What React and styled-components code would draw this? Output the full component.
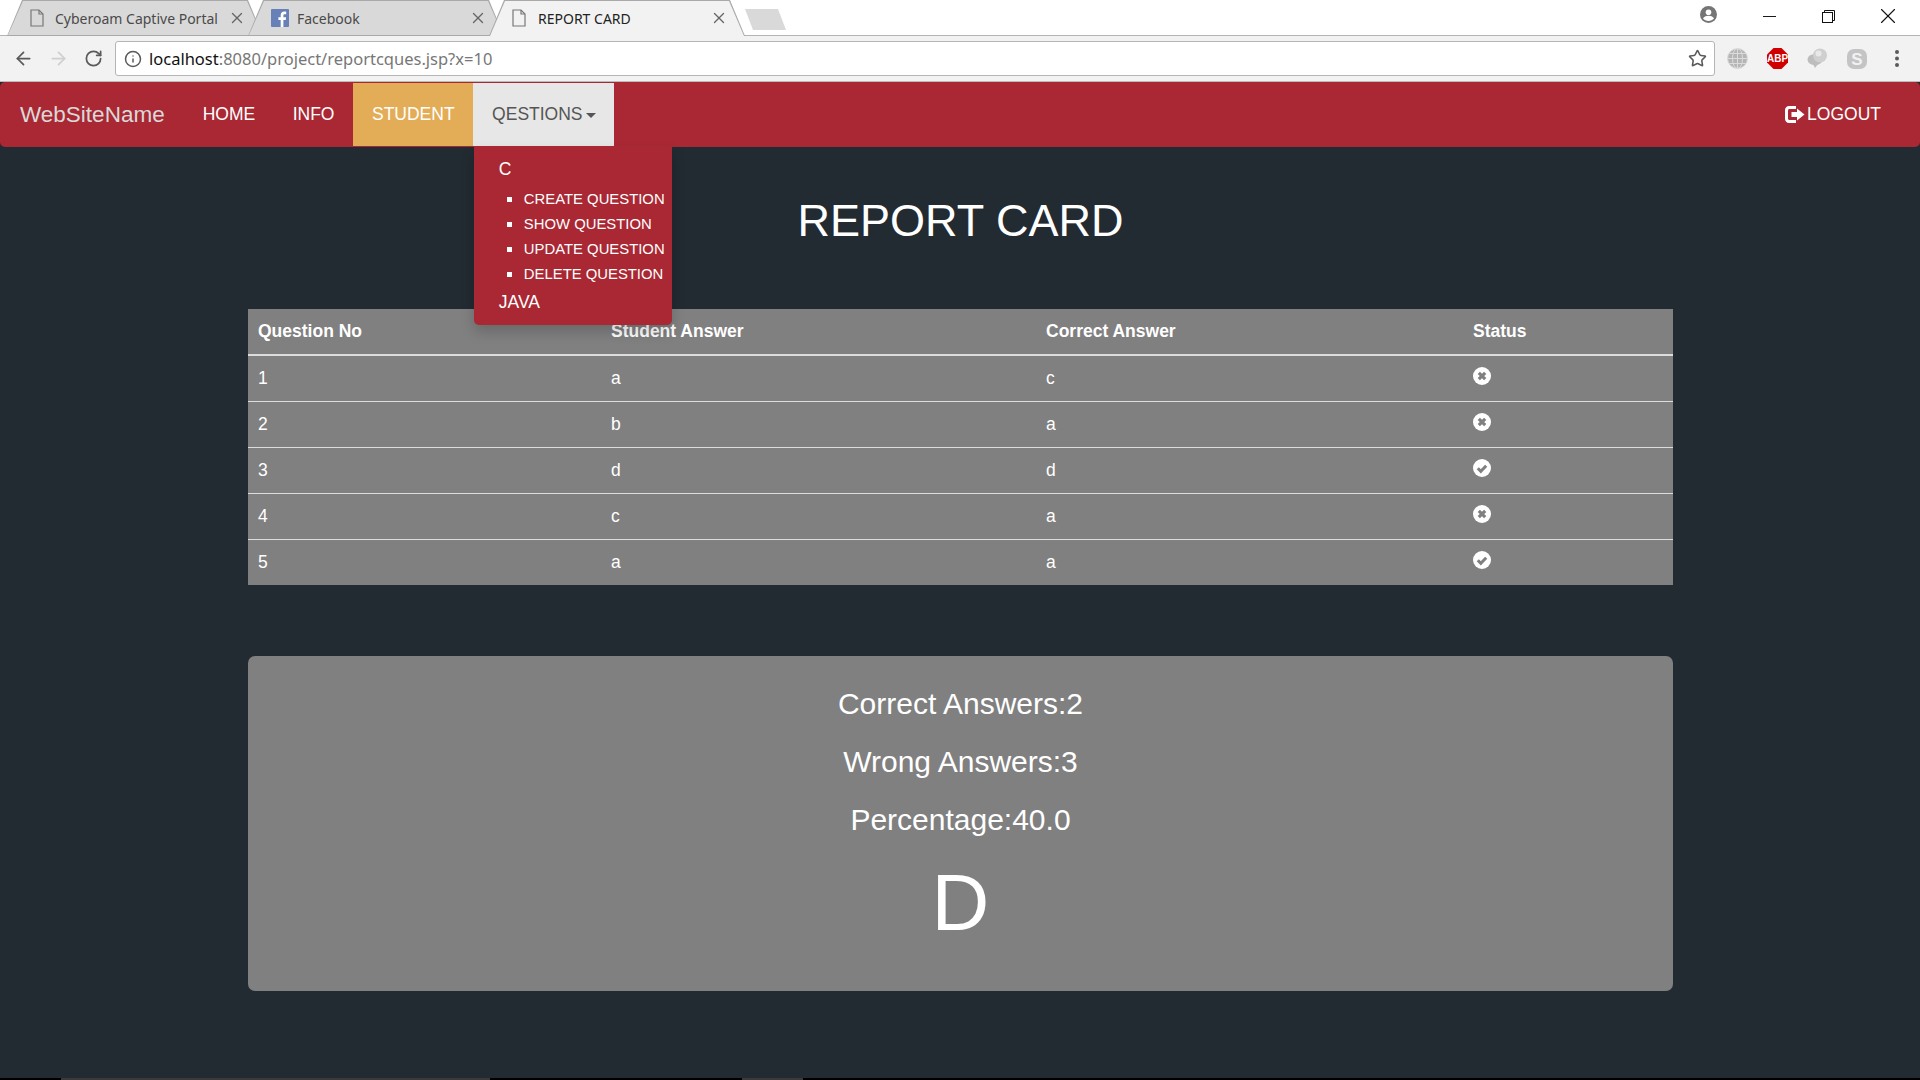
import React from "react";
import styled, { createGlobalStyle } from "styled-components";
import { ArrowLeft, ArrowRight, RotateCw, Info, Star, X, Minus } from "lucide-react";

const GlobalStyle = createGlobalStyle`
    html, body {
        margin: 0;
        padding: 0;
        background: #222a32;
        overflow: hidden;
    }
    * {
        box-sizing: border-box;
    }
`;

const Page = styled.div`
    display: flex;
    flex-direction: column;
    height: 1080px;
    font-family: "Liberation Sans", Arial, sans-serif;
    font-size: 17.5px;
    color: #fff;
`;

/* browser chrome */
const TitleBar = styled.div`
    align-items: flex-start;
    background: #fff;
    display: flex;
    height: 36px;
    padding-left: 7px;
    border-bottom: 1px solid #b4b4b4;
`;
const Tab = styled.div`
    align-items: center;
    display: flex;
    flex: none;
    height: 36px;
    margin-right: -15px;
    padding: 0 17px 0 23px;
    position: relative;
    width: 256px;
    z-index: ${(p) => (p.$active ? 2 : 1)};
    font-family: "Noto Sans", sans-serif;
    font-size: 14px;
    color: ${(p) => (p.$active ? "#222" : "#4a4a4a")};
    &::before,
    &::after {
        content: "";
        position: absolute;
        z-index: -1;
    }
    &::before {
        inset: 0;
        background: #a9a9a9;
        clip-path: polygon(15px 0, 241px 0, 256px 36px, 0 36px);
    }
    &::after {
        inset: 1px 1px ${(p) => (p.$active ? "0" : "1px")} 1px;
        background: ${(p) => (p.$active ? "#f2f2f2" : "#d9d9d9")};
        clip-path: polygon(15px 0, 239px 0, 254px 100%, 0 100%);
    }
`;
const TabLabel = styled.span`
    flex: 1;
    margin-left: ${(p) => p.$gap || "11px"};
    white-space: nowrap;
`;
const TabClose = styled(X)`
    color: #666;
    flex: none;
`;
const NewTab = styled.div`
    background: #d9d9d9;
    clip-path: polygon(0 0, 33px 0, 41px 21px, 8px 21px);
    flex: none;
    height: 21px;
    margin: 9px 0 0 15px;
    position: relative;
    width: 41px;
`;
const WindowControls = styled.div`
    align-items: center;
    display: flex;
    height: 32px;
    margin-left: auto;
    padding-right: 3px;
    color: #111;
`;
const Profile = styled.svg`
    margin-right: 23px;
    margin-top: -3px;
`;
const WindowButton = styled.div`
    align-items: center;
    display: flex;
    justify-content: center;
    width: 59px;
`;
const ToolBar = styled.div`
    align-items: center;
    background: #f2f2f2;
    border-bottom: 1px solid #bcbcbc;
    display: flex;
    height: 46px;
    padding-left: 13px;
`;
const NavIcon = styled.div`
    align-items: center;
    color: ${(p) => (p.$off ? "#cfcfcf" : "#5a5a5a")};
    display: flex;
    flex: none;
    justify-content: center;
    margin-right: 14px;
    width: 21px;
`;
const AddressBox = styled.div`
    align-items: center;
    background: #fff;
    border: 1px solid #b5b5b5;
    border-radius: 3px;
    color: #5a5a5a;
    display: flex;
    flex: none;
    height: 35px;
    margin-left: -3px;
    padding: 0 7px 0 8px;
    width: 1600px;
`;
const Url = styled.div`
    flex: 1;
    margin-left: 7px;
    font-family: "Noto Sans", sans-serif;
    font-size: 16.5px;
    color: #777;
    white-space: nowrap;
    b {
        color: #111;
        font-weight: 400;
    }
`;
const Extensions = styled.div`
    align-items: center;
    display: flex;
    padding-left: 2px;
`;
const ExtensionSlot = styled.div`
    align-items: center;
    display: flex;
    flex: none;
    justify-content: center;
    width: 40px;
`;

/* navbar */
const Navbar = styled.nav`
    align-items: stretch;
    background: #a92833;
    border-radius: 5px;
    display: flex;
    height: 65px;
    padding: 1px 39px 1px 0;
`;
const Brand = styled.a`
    align-items: center;
    color: #d9d9d9;
    display: flex;
    font-size: 22.5px;
    padding: 0 19.25px 0 20px;
`;
const NavItem = styled.a`
    align-items: center;
    background: ${(p) => p.$bg || "transparent"};
    color: ${(p) => p.$color || "#fff"};
    display: flex;
    padding: 0 18.75px;
    white-space: nowrap;
`;
const Caret = styled.span`
    border-left: 5px solid transparent;
    border-right: 5px solid transparent;
    border-top: 5px solid #555;
    margin-left: 3px;
    margin-top: 2px;
`;
const NavRight = styled.div`
    align-items: center;
    display: flex;
    gap: 2px;
    margin-left: auto;
`;
const MenuAnchor = styled.div`
    display: flex;
    position: relative;
`;
const Dropdown = styled.div`
    background: #a92833;
    border-radius: 0 0 5px 5px;
    box-shadow: 0 7px 14px rgba(0, 0, 0, 0.18);
    height: 179px;
    left: 0.5px;
    padding: 11px 0 0 25px;
    position: absolute;
    top: 63px;
    width: 198px;
    z-index: 5;
`;
const GroupName = styled.div`
    line-height: 25px;
`;
const SubList = styled.ul`
    font-size: 14.85px;
    line-height: 25px;
    list-style: none;
    margin: 5px 0 3px;
    padding-left: 25px;
    white-space: nowrap;
`;
const SubItem = styled.li`
    position: relative;
    &::before {
        background: #fff;
        content: "";
        height: 5px;
        left: -17px;
        position: absolute;
        top: 10px;
        width: 5px;
    }
`;

/* page body */
const Main = styled.main`
    display: flex;
    flex: 1;
    flex-direction: column;
    padding: 49px 247px 0 248px;
`;
const Title = styled.h1`
    font-size: 45px;
    font-weight: 400;
    line-height: 50px;
    margin: 0 0 63px;
    text-align: center;
`;
const Table = styled.table`
    background: #808080;
    border-collapse: collapse;
    table-layout: fixed;
    width: 100%;
`;
const HeadCell = styled.th`
    border-bottom: 2px solid #ddd;
    font-weight: 700;
    height: 46px;
    padding: 0 10px;
    text-align: left;
    width: ${(p) => p.$width};
`;
const Row = styled.tr`
    height: 46px;
    & + & td {
        border-top: 1px solid #ddd;
    }
`;
const Cell = styled.td`
    padding: 0 10px;
`;
const StatusIcon = styled.svg`
    display: block;
    margin-top: -5px;
`;
const Summary = styled.section`
    align-items: center;
    background: #808080;
    border-radius: 7px;
    display: flex;
    flex-direction: column;
    height: 335px;
    margin-top: 71px;
    padding-top: 31px;
`;
const Stat = styled.h3`
    font-size: 30px;
    font-weight: 400;
    line-height: 33px;
    margin: 0 0 25px;
`;
const Grade = styled.h1`
    font-size: 80px;
    font-weight: 400;
    line-height: 88px;
    margin: -2px 0 0;
`;

const Strip = styled.div`
    background: #000;
    display: flex;
    flex: none;
    height: 2px;
`;
const StripPart = styled.div`
    background: #3a3a3a;
    margin-left: ${(p) => p.$left}px;
    width: ${(p) => p.$width}px;
`;

const PageIcon = () => (
    <svg width="14" height="18" viewBox="0 0 14 18" fill="none" stroke="#777" strokeWidth="1.2">
        <path d="M1 1h8l4 4v12H1z" />
        <path d="M9 1v4h4" />
    </svg>
);

const FacebookIcon = () => (
    <svg width="18" height="18" viewBox="0 0 18 18">
        <rect width="18" height="18" rx="1" fill="#6781b8" />
        <path d="M12.4 18v-7h2.3l.4-2.8h-2.7V6.5c0-.8.3-1.3 1.4-1.3h1.4V2.7c-.3 0-1.1-.1-2-.1-2.1 0-3.5 1.3-3.5 3.6v2H7.4V11h2.3v7z" fill="#fff" />
    </svg>
);

const ProfileIcon = () => (
    <Profile width="17" height="17" viewBox="0 0 17 17">
        <circle cx="8.5" cy="8.5" r="8.5" fill="#757575" />
        <circle cx="8.5" cy="6.3" r="2.8" fill="#fff" />
        <path d="M3 12.5c1-2 3.5-2.7 5.5-2.7s4.5.7 5.5 2.7c-1.3 1.6-3.3 2.5-5.5 2.5S4.3 14.1 3 12.5z" fill="#fff" />
    </Profile>
);

const RestoreIcon = () => (
    <svg width="13" height="13" viewBox="0 0 13 13" fill="none" stroke="#111" strokeWidth="1">
        <rect x="0.5" y="2.5" width="10" height="10" />
        <path d="M2.5 2.5v-2h10v10h-2" />
    </svg>
);

const GlobeIcon = () => (
    <svg width="21" height="21" viewBox="0 0 21 21" fill="#b5b5b5" stroke="#dcdcdc" strokeWidth="1">
        <circle cx="10.5" cy="10.5" r="10" />
        <path d="M1 10.5h19M10.5 1v19M2.5 5.5h16M2.5 15.5h16" fill="none" />
        <ellipse cx="10.5" cy="10.5" rx="5" ry="10" fill="none" />
    </svg>
);

const AbpIcon = () => (
    <svg width="21" height="21" viewBox="0 0 21 21">
        <polygon points="6.5,0 14.5,0 21,6.5 21,14.5 14.5,21 6.5,21 0,14.5 0,6.5" fill="#d10000" />
        <text x="10.5" y="14" textAnchor="middle" fontSize="10" fontWeight="700" fontFamily="Liberation Sans, sans-serif" fill="#fff">ABP</text>
    </svg>
);

const ChatIcon = () => (
    <svg width="21" height="21" viewBox="0 0 21 21">
        <ellipse cx="8" cy="11.5" rx="7.5" ry="5.5" fill="#bdbdbd" />
        <path d="M6 16l2 4 3-4z" fill="#bdbdbd" />
        <circle cx="13" cy="7.5" r="7" fill="#cfcfcf" />
        <circle cx="11.5" cy="5.5" r="3" fill="#e8e8e8" />
    </svg>
);

const SkypeIcon = () => (
    <svg width="20" height="20" viewBox="0 0 20 20">
        <rect width="20" height="20" rx="7" fill="#c4c4c4" />
        <text x="10" y="16" textAnchor="middle" fontSize="17" fontWeight="700" fontFamily="Liberation Sans, sans-serif" fill="#f2f2f2">S</text>
    </svg>
);

const DotsIcon = () => (
    <svg width="4" height="17" viewBox="0 0 4 17" fill="#5a5a5a">
        <circle cx="2" cy="2" r="2" />
        <circle cx="2" cy="8.5" r="2" />
        <circle cx="2" cy="15" r="2" />
    </svg>
);

const LogoutIcon = () => (
    <svg width="20" height="17" viewBox="0 0 20 17" fill="#fff">
        <path d="M11 0H4C1.8 0 0 1.8 0 4v9c0 2.2 1.8 4 4 4h7v-3H4.5C3.7 14 3 13.3 3 12.5v-8C3 3.7 3.7 3 4.5 3H11z" />
        <path d="M6.5 6H12V2.5L19.5 8.5 12 14.5V11H6.5z" />
    </svg>
);

const Sign = ({ ok }) => (
    <StatusIcon width="18" height="18" viewBox="0 0 18 18">
        <circle cx="9" cy="9" r="9" fill="#fff" />
        {ok ? (
            <path d="M4.8 9.3l3 3 5.4-5.6" fill="none" stroke="#808080" strokeWidth="3" />
        ) : (
            <path d="M5.8 5.8l6.4 6.4M12.2 5.8l-6.4 6.4" fill="none" stroke="#808080" strokeWidth="3.2" />
        )}
    </StatusIcon>
);

const rows = [
    ["1", "a", "c", false],
    ["2", "b", "a", false],
    ["3", "d", "d", true],
    ["4", "c", "a", false],
    ["5", "a", "a", true],
];

const App = () => (
    <Page>
        <GlobalStyle />
        <TitleBar>
            <Tab>
                <PageIcon />
                <TabLabel>Cyberoam Captive Portal</TabLabel>
                <TabClose size={18} strokeWidth={1.8} />
            </Tab>
            <Tab>
                <FacebookIcon />
                <TabLabel $gap="8px">Facebook</TabLabel>
                <TabClose size={18} strokeWidth={1.8} />
            </Tab>
            <Tab $active>
                <PageIcon />
                <TabLabel $gap="12px">REPORT CARD</TabLabel>
                <TabClose size={18} strokeWidth={1.8} />
            </Tab>
            <NewTab />
            <WindowControls>
                <ProfileIcon />
                <WindowButton>
                    <Minus size={21} strokeWidth={1.1} />
                </WindowButton>
                <WindowButton>
                    <RestoreIcon />
                </WindowButton>
                <WindowButton>
                    <X size={26} strokeWidth={1} />
                </WindowButton>
            </WindowControls>
        </TitleBar>
        <ToolBar>
            <NavIcon>
                <ArrowLeft size={21} strokeWidth={2} />
            </NavIcon>
            <NavIcon $off>
                <ArrowRight size={21} strokeWidth={2} />
            </NavIcon>
            <NavIcon>
                <RotateCw size={19} strokeWidth={2.2} />
            </NavIcon>
            <AddressBox>
                <Info size={18} strokeWidth={2} />
                <Url>
                    <b>localhost</b>:8080/project/reportcques.jsp?x=10
                </Url>
                <Star size={19} strokeWidth={2} />
            </AddressBox>
            <Extensions>
                <ExtensionSlot>
                    <GlobeIcon />
                </ExtensionSlot>
                <ExtensionSlot>
                    <AbpIcon />
                </ExtensionSlot>
                <ExtensionSlot>
                    <ChatIcon />
                </ExtensionSlot>
                <ExtensionSlot>
                    <SkypeIcon />
                </ExtensionSlot>
                <ExtensionSlot>
                    <DotsIcon />
                </ExtensionSlot>
            </Extensions>
        </ToolBar>
        <Navbar>
            <Brand>WebSiteName</Brand>
            <NavItem>HOME</NavItem>
            <NavItem>INFO</NavItem>
            <NavItem $bg="#e3ad57">STUDENT</NavItem>
            <MenuAnchor>
                <NavItem $bg="#e7e7e7" $color="#555">
                    QESTIONS
                    <Caret />
                </NavItem>
                <Dropdown>
                    <GroupName>C</GroupName>
                    <SubList>
                        <SubItem>CREATE QUESTION</SubItem>
                        <SubItem>SHOW QUESTION</SubItem>
                        <SubItem>UPDATE QUESTION</SubItem>
                        <SubItem>DELETE QUESTION</SubItem>
                    </SubList>
                    <GroupName>JAVA</GroupName>
                </Dropdown>
            </MenuAnchor>
            <NavRight>
                <LogoutIcon />
                LOGOUT
            </NavRight>
        </Navbar>
        <Main>
            <Title>REPORT CARD</Title>
            <Table>
                <thead>
                    <tr>
                        <HeadCell $width="353px">Question No</HeadCell>
                        <HeadCell $width="435px">Student Answer</HeadCell>
                        <HeadCell $width="427px">Correct Answer</HeadCell>
                        <HeadCell>Status</HeadCell>
                    </tr>
                </thead>
                <tbody>
                    {rows.map(([no, student, correct, ok]) => (
                        <Row key={no}>
                            <Cell>{no}</Cell>
                            <Cell>{student}</Cell>
                            <Cell>{correct}</Cell>
                            <Cell>
                                <Sign ok={ok} />
                            </Cell>
                        </Row>
                    ))}
                </tbody>
            </Table>
            <Summary>
                <Stat>Correct Answers:2</Stat>
                <Stat>Wrong Answers:3</Stat>
                <Stat>Percentage:40.0</Stat>
                <Grade>D</Grade>
            </Summary>
        </Main>
        <Strip>
            <StripPart $left={61} $width={429} />
            <StripPart $left={252} $width={61} />
        </Strip>
    </Page>
);

export default App;
